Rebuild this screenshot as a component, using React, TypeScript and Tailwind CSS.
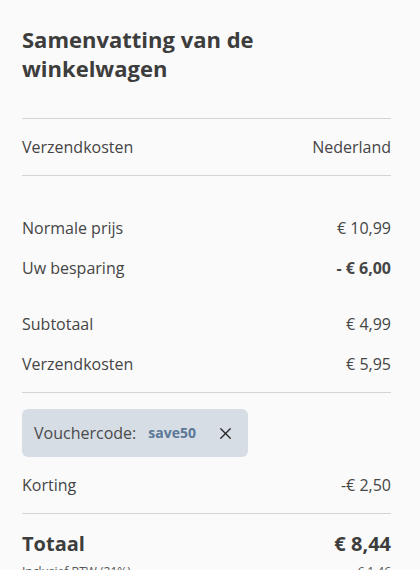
import { X } from 'lucide-react';

const Row = ({ label, value, bold }: { label: string; value: string; bold?: boolean }) => (
  <div className="flex items-center justify-between leading-6">
    <span>{label}</span>
    <span className={bold ? "font-bold" : ""}>{value}</span>
  </div>
);

const App = () => {
  return (
    <div className="min-h-[570px] bg-[#fafafa] text-[#454545] text-base font-['Open_Sans',sans-serif] pl-[22px] pr-[29px] pt-[25px] overflow-hidden h-[570px]">
      <h2 className="text-[22px] leading-[29px] font-bold text-[#3d3d3d]">
        Samenvatting van de winkelwagen
      </h2>

      <div className="mt-[35px] border-t border-b border-[#d4d4d4] py-4">
        <Row label="Verzendkosten" value="Nederland" />
      </div>

      <div className="mt-10 flex flex-col gap-4">
        <Row label="Normale prijs" value="€ 10,99" />
        <Row label="Uw besparing" value="- € 6,00" bold />
      </div>

      <div className="mt-8 flex flex-col gap-4 pb-4 border-b border-[#d4d4d4]">
        <Row label="Subtotaal" value="€ 4,99" />
        <Row label="Verzendkosten" value="€ 5,95" />
      </div>

      <div className="mt-4 flex flex-col gap-4 pb-4 border-b border-[#d4d4d4]">
        <div className="flex items-center h-12 w-[226px] rounded-md bg-[#d6dde5] pl-3">
          <span className="text-[#4a4a4a]">Vouchercode:</span>
          <span className="ml-3 text-sm font-bold text-[#5b7896]">save50</span>
          <button className="ml-auto mr-[13px] text-[#222]">
            <X size={19} strokeWidth={1.6} />
          </button>
        </div>
        <Row label="Korting" value="-€ 2,50" />
      </div>

      <div className="mt-4 flex items-center justify-between text-xl leading-7 font-bold text-[#3d3d3d]">
        <span>Totaal</span>
        <span>€ 8,44</span>
      </div>
      <div className="mt-[6px] flex items-center justify-between text-xs leading-4 text-[#555]">
        <span>Inclusief BTW (21%)</span>
        <span>€ 1,46</span>
      </div>
    </div>
  );
};

export default App;
